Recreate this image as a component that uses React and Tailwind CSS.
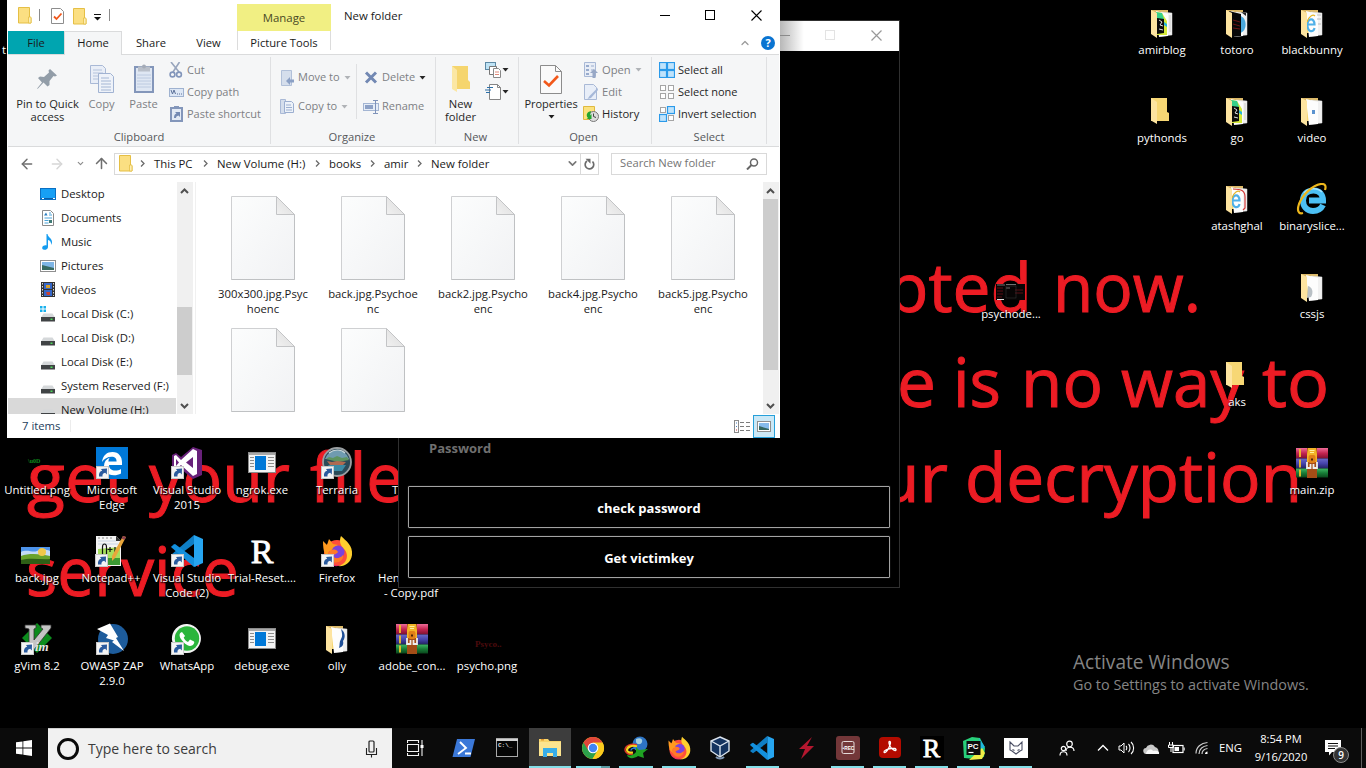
import React from "react";
import { ChevronUp, ChevronDown, ArrowLeft, ArrowRight, ArrowUp } from "lucide-react";

/* ---------- small building blocks ---------- */

const Svg = ({ w, h = w, vb, children, className = "" }) => (
  <svg width={w} height={h} viewBox={vb || `0 0 ${w} ${h}`} className={`block shrink-0 ${className}`} fill="none">
    {children}
  </svg>
);

const Caret = ({ color = "#1e1e1e", className = "" }) => (
  <Svg w={7} h={4} className={className}>
    <path d="M0.5 0h6L3.500 3.500z" fill={color} />
  </Svg>
);

/* ---------- desktop icons ---------- */

const Shortcut = () => (
  <g>
    <rect x="0.500" y="19.500" width="12" height="12" fill="#f4f4f4" stroke="#c9c9c9" />
    <path d="M3 29.500c-.5-3.500 1-5.500 3.200-5.800L5 22l6-.6-.2 6-1.600-1.700C7 26 6.200 27.500 6.500 29.500z" fill="#2b5b9e" />
  </g>
);

const FolderIcon = ({ kind }) => (
  <Svg w={32}>
    <path d="M5 3h16v14l2 1v8H5z" fill="#f7d774" />
    {kind !== "plain" && (
      <g>
        <path d="M5 3h17v3H5z" fill="#dcb968" />
        <path d="M15 5l11 1v22l-11 1z" fill="#f1f1f1" stroke="#d8d8d8" strokeWidth=".5" />
        <path d="M10 4l12 3v22l-9 1z" fill="#fdfdfd" />
      </g>
    )}
    {kind === "pc" && (
      <g>
        <path d="M10 5l6 1 5 8v14l-10 0z" fill="#d6ea3a" />
        <path d="M10 5l6 1 2 6-8 0z" fill="#36cf8a" />
        <path d="M11 11l7 1v14l-7 1z" fill="#0b0b0b" />
        <path d="M13 13l3 2-2 3 3 1M13 22l4 1" stroke="#ddd" strokeWidth="1" />
        <path d="M18 15l3 2v3l-3-2z" fill="#25b7d9" />
        <path d="M24 8v17" stroke="#ccc" />
      </g>
    )}
    {kind === "dark" && (
      <g>
        <path d="M19 9c7 1 8 15 0 17z" fill="#49a8dd" />
        <path d="M8 4l12 3v22l-9 1z" fill="#080808" />
        <path d="M12 13l7 2M12 17l7 2M12 21l7 1" stroke="#6b1414" strokeWidth="1" />
        <path d="M20 5l5 1v3z" fill="#222" />
      </g>
    )}
    {(kind === "ie" || kind === "iered") && (
      <g>
        <path d="M18.500 21c-1 5-6.500 4-7-2-.5-8 7-9 7-1.500h-6" stroke="#4fb0e8" strokeWidth="2.200" />
        <path d="M11 15c2-6 6-8 8-6" stroke="#e5b62a" strokeWidth="1.200" />
        {kind === "iered" ? (
          <path d="M12 6c9 0 12 2 12 8v11l-2 2" stroke="#d23b3b" strokeWidth="1.200" />
        ) : (
          <path d="M21 8h4M21 12h4M22 17h3" stroke="#bbb" strokeWidth="1" />
        )}
      </g>
    )}
    {kind === "video" && <rect x="16" y="15" width="3" height="4" fill="#5b93cf" />}
    {kind === "css" && <path d="M12 15c4 1 6 6 3 11l-4 1z" fill="#b9c0c5" />}
    {kind === "olly" && <path d="M20 6c4 3 5 8 2 12 1 4-1 6-4 7 1-3 0-6 2-9s1-6 0-10z" fill="#1f4f97" />}
    <path d={kind === "plain" ? "M5 3l6 4v22l-6-3.500z" : "M5 3l6 3v25l-6-4z"} fill="#fde4a0" />
  </Svg>
);

const WinRar = () => (
  <Svg w={32}>
    <defs>
      <linearGradient id="rr" x1="0" y1="0" x2="0" y2="1"><stop stopColor="#ee6c98" /><stop offset=".5" stopColor="#c32450" /><stop offset="1" stopColor="#7c1030" /></linearGradient>
      <linearGradient id="rb" x1="0" y1="0" x2="0" y2="1"><stop stopColor="#6a69c9" /><stop offset=".5" stopColor="#4543ab" /><stop offset="1" stopColor="#22215f" /></linearGradient>
      <linearGradient id="rg" x1="0" y1="0" x2="0" y2="1"><stop stopColor="#3fb765" /><stop offset=".5" stopColor="#177c36" /><stop offset="1" stopColor="#0a461c" /></linearGradient>
    </defs>
    <rect x="0" y="1" width="32" height="10.500" fill="url(#rr)" />
    <rect x="0" y="11.500" width="32" height="10" fill="url(#rb)" />
    <rect x="0" y="21.500" width="32" height="9" fill="url(#rg)" />
    <path d="M4 2v8M4 12.500v8M4 22.500v7" stroke="#f0c028" strokeWidth="1.800" />
    <rect x="11" y="1" width="10" height="30" fill="#a34d17" />
    <path d="M12 1h8l1 6v8H11V7z" fill="#f3b427" />
    <rect x="12.500" y="8" width="7" height="8" rx="2" fill="#e07f18" />
    <path d="M13.500 3.500h5M14 5.500h4" stroke="#fff0a0" />
    <path d="M15 11.500h2v2h-2z" fill="#4b2508" />
    <path d="M11 15v6h3.500v-4M21 15v6h-3.500v-4" stroke="#eee" strokeWidth="1.800" />
  </Svg>
);

const InternetExplorer = () => (
  <Svg w={32}>
    <path d="M27 22c-2 4-5.500 6-10 6-6 0-10-4.500-10-10.500S11 7.500 17.500 7.500c6 0 9.500 4 9.500 10H13" stroke="#4cc0f5" strokeWidth="6" />
    <path d="M8 10c4-5 13-6 18-1" stroke="#a8e4ff" strokeWidth="1.500" />
    <path d="M7 30c-5 1.500-6-3-4-9C7 11 17 2 25 1c5-.5 5 3 4 6" stroke="#edb71c" strokeWidth="2.200" />
  </Svg>
);

const Edge = () => (
  <Svg w={32}>
    <rect width="32" height="32" fill="#0078d7" />
    <path d="M6 15C7 8 11 5 16.500 5 23 5 26 10 26 15v3H13c0 4 3 5.500 6 5.500 2.500 0 4.500-.7 6-1.600v4.500c-2 1.200-4.500 1.800-7 1.800C11 28.200 8 24 8 19c0-4 2-7 6-8.500-1 1-1.500 2.500-1.600 4h8.200c0-3-1.500-4.800-5-4.800-4 0-7.500 2-9.600 5.300z" fill="#fff" />
    <Shortcut />
  </Svg>
);

const VisualStudio = () => (
  <Svg w={32}>
    <path d="M22 0l9 3v25l-9 4-12-10-5 4-4-2V8l4-2 5 4z" fill="#68217a" />
    <path d="M22 2l4 2v23l-4 2L10 18l-5 4-2-1V9l2-1 5 5z" fill="#fff" />
    <path d="M22 10v11l-7-5.500zM5 12v7l3-3.500z" fill="#68217a" />
    <Shortcut />
  </Svg>
);

const ExeWindow = () => (
  <Svg w={32}>
    <rect x="2.500" y="5.500" width="27" height="20" fill="#f3f3f3" stroke="#8b8b8b" />
    <rect x="3" y="6" width="26" height="2" fill="#a9a9a9" />
    <rect x="9" y="9" width="11" height="14" fill="#0078d7" />
    <path d="M4 10.500h4M4 13.500h4M4 16.500h4M4 19.500h4M22 10.500h6M22 13.500h6M22 16.500h6M22 19.500h6" stroke="#8c8c8c" />
  </Svg>
);

const Terraria = () => (
  <Svg w={32}>
    <circle cx="16" cy="15" r="14" fill="#2a4a58" stroke="#9a9fa2" strokeWidth="1.800" />
    <path d="M4 12a12.500 12.500 0 0124 0z" fill="#6f9bb0" />
    <path d="M5 12l3-2 4 1 4-2 5 2 5-1 2 3-11 2z" fill="#5e9460" />
    <path d="M6 14l5 1 5-1 9 1-3 3H9z" fill="#b06a50" />
    <path d="M7 18h18l-4 6H11z" fill="#3b8aa4" />
    <path d="M8 6c5-4 12-4 16 0" stroke="#c9d6da" strokeWidth="1.200" />
    <Shortcut />
  </Svg>
);

const Landscape = () => (
  <Svg w={32}>
    <rect x="0" y="12" width="29" height="17" fill="#4d93ea" />
    <path d="M0 17c6-3 12 1 16-1s9-2 13 0v5H0z" fill="#c4dbf6" />
    <path d="M0 21c8-3 20-2 29 0v8H0z" fill="#6aa32c" />
    <path d="M0 25c10-3 20 0 29-1v5H0z" fill="#2e5f16" />
    <circle cx="21" cy="17" r="4" fill="#f1c84a" />
  </Svg>
);

const NotepadPP = () => (
  <Svg w={32}>
    <path d="M1 1h20l5 5v25H1z" fill="#f4f4f4" />
    <path d="M3 14l22-2v18H3z" fill="#a5df5c" />
    <path d="M3 23h22v7H3z" fill="#3c9a33" />
    <path d="M3 3h2M7 3h2M11 3h2M15 3h2" stroke="#888" />
    <path d="M3 6h18M3 9h20" stroke="#c9d6e5" />
    <path d="M21 1v5h5z" fill="#333" />
    <path d="M7.500 21V12c0-4 4-4 4 0v8M15 12v5M12.500 14.500h5M20 12v5" stroke="#111" strokeWidth="1.200" />
    <path d="M28 1l3 1-11 21-3 3v-5z" fill="#e9a63a" />
    <path d="M28 1l3 1-1.500 3-3-1.500z" fill="#8f4250" />
    <Shortcut />
  </Svg>
);

const VSCodeGlyph = () => (
  <g>
    <path d="M0 12l3-3 22 17v6L1.500 12z" fill="#0b6db3" />
    <path d="M23 0l9 4v24l-9 4z" fill="#26a5f0" />
    <path d="M23 0v9L4 23l-4-3z" fill="#0f7fc6" />
    <path d="M23 32v-9L4 9l-4 3z" fill="#1390dd" />
  </g>
);

const VSCode = () => (
  <Svg w={32}>
    <VSCodeGlyph />
    <Shortcut />
  </Svg>
);

const FirefoxGlyph = () => (
  <g>
    <circle cx="16" cy="18" r="13" fill="#ff4f3a" />
    <path d="M20 1c5 5 12 9 11 19-1 8-8 12-14 11 10-2 11-12 6-17-4-4-5-8-3-13z" fill="#ffcf2e" />
    <path d="M2 6l4 4 2-6 4 5 5 1c-3 3-5 4-5 6-5-1-6 3-3 7-5-2-7-6-7-17z" fill="#ff9a1f" />
    <circle cx="17" cy="17" r="6.500" fill="#7b43dd" />
    <path d="M9 16c4-3 7-1 8 1-2 3-5 2-6 4 2 3 8 3 11-1 1 5-5 9-10 7-5-2-6-8-3-11z" fill="#ff7a28" />
    <path d="M4 22c3 7 10 9 16 8-6 3-14 0-16-8z" fill="#e9246e" />
  </g>
);

const Firefox = () => (
  <Svg w={32}>
    <FirefoxGlyph />
    <Shortcut />
  </Svg>
);

const RGlyph = ({ className = "text-[34px] h-8 w-8" }) => (
  <div className={`grid place-items-center font-['Liberation_Serif',serif] leading-none text-white [-webkit-text-stroke:0.8px_#fff] ${className}`}>R</div>
);

const GVim = () => (
  <Svg w={32}>
    <path d="M16 0l15 15-15 15L1 15z" fill="#0b8c1c" />
    <path d="M4 2h11v3l-2 1v11l9-11-2-1V2h10v3L12 28H8V6L4 5z" fill="#c4c4c4" stroke="#333" strokeWidth=".8" />
    <text x="14" y="28" fontSize="13" fontStyle="italic" fontWeight="bold" fontFamily="Liberation Serif, serif" fill="#e4e4e4">im</text>
    <Shortcut />
  </Svg>
);

const Zap = () => (
  <Svg w={32}>
    <circle cx="17" cy="16" r="15" fill="#1d5c9c" />
    <path d="M1 6L14 0.500 22 14l-2 1 8 13-12-9 2-1.500-8-2.500 2-3z" fill="#fff" />
    <Shortcut />
  </Svg>
);

const WhatsApp = () => (
  <Svg w={32}>
    <path d="M1 31l2-8A14.500 14.500 0 1116 30c-3 0-5 0-7-1.500z" fill="#f4f4f4" />
    <circle cx="16" cy="15.500" r="12.200" fill="#2bb53c" />
    <path d="M11 9c-3 1-3 4-1 7s6 7 9 7c3 0 5-3 4-4.500l-4-2-2 2.500c-2-1-3.500-2.500-4.300-4.500l1.400-1.500z" fill="#fff" />
    <Shortcut />
  </Svg>
);

const PsychoShot = () => (
  <Svg w={32}>
    <rect x="1" y="13" width="29" height="16" fill="#070505" />
    <path d="M2 14h8M11 13.500h10M11 17h4" stroke="#8b8b8b" strokeWidth=".8" />
    <path d="M2 17h6M2 20h6M2 23h6M2 26h5M20 19h8M20 22h8" stroke="#5b0f14" strokeWidth="1" />
    <path d="M2 28.500h7" stroke="#ddd" />
    <rect x="11" y="15" width="10" height="12" stroke="#333" strokeWidth=".6" />
  </Svg>
);

const TinyLabel = ({ color, x, y, children, size }) => (
  <Svg w={32}>
    <text x={x} y={y} fontSize={size} fontWeight="bold" fontFamily="Liberation Serif, serif" fill={color}>{children}</text>
  </Svg>
);

/* left/top classes of each cell on the free desktop canvas */
const desktop = [
  ["left-[-1px] top-[443px]", <TinyLabel color="#0f8a1e" x="7" y="16" size="6">{"\\u0D"}</TinyLabel>, "Untitled.png"],
  ["left-[74px] top-[443px]", <Edge />, "Microsoft\nEdge"],
  ["left-[149px] top-[443px]", <VisualStudio />, "Visual Studio\n2015"],
  ["left-[224px] top-[443px]", <ExeWindow />, "ngrok.exe"],
  ["left-[299px] top-[443px]", <Terraria />, "Terraria"],
  ["left-[-1px] top-[531px]", <Landscape />, "back.jpg"],
  ["left-[73px] top-[531px]", <NotepadPP />, "Notepad++"],
  ["left-[149px] top-[531px]", <VSCode />, "Visual Studio\nCode (2)"],
  ["left-[224px] top-[531px]", <RGlyph />, "Trial-Reset...."],
  ["left-[299px] top-[531px]", <Firefox />, "Firefox"],
  ["left-[-1px] top-[619px]", <GVim />, "gVim 8.2"],
  ["left-[74px] top-[619px]", <Zap />, "OWASP ZAP\n2.9.0"],
  ["left-[149px] top-[619px]", <WhatsApp />, "WhatsApp"],
  ["left-[224px] top-[619px]", <ExeWindow />, "debug.exe"],
  ["left-[299px] top-[619px]", <FolderIcon kind="olly" />, "olly"],
  ["left-[374px] top-[619px]", <WinRar />, "adobe_con..."],
  ["left-[449px] top-[619px]", <TinyLabel color="#4d0b0d" x="4" y="24" size="9">Psyco..</TinyLabel>, "psycho.png"],
  ["left-[1124px] top-[3px]", <FolderIcon kind="pc" />, "amirblog"],
  ["left-[1199px] top-[3px]", <FolderIcon kind="dark" />, "totoro"],
  ["left-[1274px] top-[3px]", <FolderIcon kind="ie" />, "blackbunny"],
  ["left-[1124px] top-[91px]", <FolderIcon kind="plain" />, "pythonds"],
  ["left-[1199px] top-[91px]", <FolderIcon kind="pc" />, "go"],
  ["left-[1274px] top-[91px]", <FolderIcon kind="video" />, "video"],
  ["left-[1199px] top-[179px]", <FolderIcon kind="iered" />, "atashghal"],
  ["left-[1274px] top-[179px]", <InternetExplorer />, "binaryslice..."],
  ["left-[973px] top-[267px]", <PsychoShot />, "psychode..."],
  ["left-[1274px] top-[267px]", <FolderIcon kind="css" />, "cssjs"],
  ["left-[1199px] top-[355px]", <FolderIcon kind="plain" />, "aks"],
  ["left-[1274px] top-[443px]", <WinRar />, "main.zip"],
];

const labelShadow = "[text-shadow:0_1px_2px_#000,1px_1px_1px_#000]";

function DesktopIcon({ pos, icon, label }) {
  return (
    <div className={`absolute flex w-[76px] flex-col items-center pt-1 ${pos}`}>
      {icon}
      <span className={`mt-[3px] text-center text-[11.400px] leading-[15px] whitespace-pre text-white ${labelShadow}`}>{label}</span>
    </div>
  );
}

function Wallpaper() {
  const words = [
    ["pted", 887, 312, 145], ["now.", 1053, 312, 148],
    ["e", 897, 407, 39], ["is", 953, 407, 48], ["no", 1021, 407, 82], ["way", 1121, 407, 123], ["to", 1262, 407, 67],
    ["get", 27, 502, 102], ["your", 149, 502, 141], ["file", 310, 502, 94],
    ["ur", 877, 502, 71], ["decryption", 965, 502, 337], ["service", 26, 596, 213],
  ];
  return (
    <svg className="absolute inset-0" width="1366" height="768">
      {words.map(([t, x, y, w]) => (
        <text key={t + x} x={x} y={y} textLength={w} lengthAdjust="spacingAndGlyphs" fontSize="67" fontFamily="Open Sans, sans-serif" fill="#ec1c24" stroke="#ec1c24" strokeWidth="1">{t}</text>
      ))}
    </svg>
  );
}

/* ---------- password window behind ---------- */

function PasswordWindow() {
  return (
    <section className="absolute top-5 left-[398px] flex h-[568px] w-[502px] flex-col border border-[#303030] bg-black">
      <header className="flex h-[30px] shrink-0 items-center justify-end bg-white">
        <div className="flex h-full w-[119px] items-center bg-linear-to-r from-[#b8b8b8] to-white to-20% pb-[2px]">
          <span className="h-px w-[10px] bg-[#8a8a8a]" />
          <span className="ml-[35px] h-[10px] w-[10px] border border-[#e3e3e3]" />
          <Svg w={11} className="ml-[36px]"><path d="M.5.5l10 10M10.500.5l-10 10" stroke="#999" strokeWidth="1.200" /></Svg>
        </div>
      </header>
      <div className="mt-auto flex flex-col gap-2 px-[9px] pb-[9px] font-bold">
        <div className="mb-[21px] pl-[21px] text-[13px] leading-[18px] text-[#6f6f6f]">Password</div>
        <button className="h-[42px] rounded-[1px] border border-[#a3a3a3] pt-[2px] text-[13px] leading-none text-white shadow-[0_0_1px_#777]">check password</button>
        <button className="h-[42px] rounded-[1px] border border-[#a3a3a3] pt-[2px] text-[13px] leading-none text-white shadow-[0_0_1px_#777]">Get victimkey</button>
      </div>
    </section>
  );
}

/* ---------- explorer ---------- */

const MiniFolder = ({ className = "" }) => (
  <Svg w={14} h={17} className={className}>
    <path d="M.5.5h11v10l1.500.5v5H.5z" fill="#fbdf82" stroke="#e5bf45" />
    <path d="M10.500 10h2.500v6h-2.500z" fill="#fdeeb5" stroke="#e5bf45" strokeWidth=".8" />
  </Svg>
);

function TitleBar() {
  return (
    <div className="flex h-[31px] items-start pl-[10px]">
      <MiniFolder className="mt-[7px]" />
      <span className="mt-[9px] ml-[7px] h-3 w-px bg-[#8b8b8b]" />
      <Svg w={13} h={16} className="mt-2 ml-[11px]">
        <path d="M.5.5h9l3 3v12H.5z" fill="#fff" stroke="#8d8d8d" />
        <path d="M3 8.500l2.500 2.500 5-5.500" stroke="#f0581c" strokeWidth="1.800" />
      </Svg>
      <MiniFolder className="mt-2 ml-[9px]" />
      <Svg w={7} h={7} className="mt-[14px] ml-[7px]"><path d="M0 .5h7" stroke="#111" /><path d="M0 3h7L3.500 6.500z" fill="#111" /></Svg>
      <span className="mt-[9px] ml-[8px] h-3 w-px bg-[#8b8b8b]" />
      <div className="mt-1 ml-[127px] h-[27px] w-[94px] bg-[#f1ef83] text-center text-[11.400px] leading-[28px] text-[#4a4a26]">Manage</div>
      <span className="ml-[13px] text-[11.400px] leading-[31px]">New folder</span>
      <div className="mr-[17px] ml-auto flex h-[30px] items-center">
        <span className="h-px w-[10px] bg-black" />
        <span className="ml-[35px] h-[10px] w-[10px] border border-black" />
        <Svg w={11} className="ml-[36px]"><path d="M.5.5l10 10M10.500.5l-10 10" stroke="#000" strokeWidth="1.100" /></Svg>
      </div>
    </div>
  );
}

function TabRow() {
  return (
    <div className="flex h-[23px] text-center text-[11.200px] leading-[23px]">
      <div className="w-[56px] bg-[#00a5b0]">File</div>
      <div className="relative z-10 -mb-px w-[58px] border border-b-0 border-[#dadbdc] bg-[#f5f6f7] leading-[22px]">Home</div>
      <div className="w-[58px]">Share</div>
      <div className="w-[57px]">View</div>
      <div className="mb-1 w-[94px] border-x border-[#dcdcdc]">Picture Tools</div>
      <div className="mr-1 ml-auto flex items-center gap-[10px]">
        <ChevronUp size={12} strokeWidth={2.500} color="#9a9a9a" />
        <div className="grid h-[14px] w-[14px] place-items-center rounded-full bg-[#0a74d1] text-[11px] leading-none font-bold text-white">?</div>
      </div>
    </div>
  );
}

const Small = ({ icon, children, off, caret, h = "h-[22px]" }) => (
  <div className={`flex ${h} items-center whitespace-nowrap ${off ? "text-[#7d8084]" : "text-[#262626]"}`}>
    <span className="mr-[3px] grid w-4 shrink-0 place-items-center">{icon}</span>
    {children}
    {caret && <Caret className="ml-[4px]" color={caret} />}
  </div>
);

const Big = ({ icon, lines, w, off, children }) => (
  <div className={`flex shrink-0 flex-col items-center pt-[7px] text-center leading-[13px] whitespace-nowrap ${w} ${off ? "text-[#7d8084]" : "text-[#262626]"}`}>
    <div className="mb-px grid h-[34px] place-items-center">{icon}</div>
    {lines.map((l) => <div key={l}>{l}</div>)}
    {children}
  </div>
);

const Group = ({ w, label, children }) => (
  <div className={`flex shrink-0 flex-col ${w}`}>
    <div className="flex h-[72px]">{children}</div>
    <div className="h-[19px] text-center leading-[19px] text-[#55585b]">{label}</div>
  </div>
);

const Sep = () => <span className="mt-[2px] h-[87px] w-px shrink-0 bg-[#dfe0e2]" />;

const CopyDocs = () => (
  <Svg w={24} h={28}>
    <path d="M.5.5h12l3 3v15H.5z" fill="#e9eef7" stroke="#a9b9d6" />
    <path d="M3 5h9M3 8h10M3 11h10M3 14h10" stroke="#b4c3dc" />
    <path d="M8.500 8.500h12l3 3v16h-15z" fill="#eef2f9" stroke="#a1b3d2" />
    <path d="M11 13h8M11 16h10M11 19h10M11 22h10M11 25h10" stroke="#a4b6d4" />
  </Svg>
);

const ClipboardIcon = () => (
  <Svg w={22} h={30}>
    <rect x="2" y="3" width="18" height="25" fill="#dfe7f3" stroke="#8396ba" strokeWidth="2" />
    <rect x="5" y="2.500" width="12" height="5" fill="#b9bfc9" />
    <circle cx="11" cy="2.500" r="2" fill="#a4abb7" />
    <path d="M4 11h14M4 14h14M4 17h14M4 20h14M4 23h14" stroke="#bccae0" />
  </Svg>
);

const select = {
  all: [1, 1, 1, 1],
  none: [0, 0, 0, 0],
  invert: [0, 1, 1, 0],
};
const SelectIcon = ({ kind }) => (
  <Svg w={16}>
    {select[kind].map((on, i) => {
      const x = (i % 2) * 8;
      const y = i > 1 ? 8 : 0;
      return on ? (
        <rect key={i} x={x + 0.5} y={y + 0.5} width="7" height="7" fill="#bfe3fb" stroke="#2a9aea" strokeWidth="1.200" />
      ) : (
        <rect key={i} x={x + 1.5} y={y + 1.5} width="5" height="5" fill="#fff" stroke="#a5a5a5" />
      );
    })}
  </Svg>
);

function Ribbon() {
  return (
    <div className="flex h-[93px] border-y border-[#dadbdc] bg-[#f5f6f7] text-[11.200px]">
      <Group w="w-[262px]" label="Clipboard">
        <Big w="ml-[6px] w-[67px]" lines={["Pin to Quick", "access"]} icon={
          <Svg w={21} h={22}><path d="M13 1l7 6.500-2 1-1.500-.5-4 5v4l-2 1.500-4-4L1 20.500 0 21l.5-1L5 14.500l-4-4.500 2-1.500 4 .5 5-4.500-.5-2z" fill="#929da8" /></Svg>
        } />
        <Big w="w-[41px]" off lines={["Copy"]} icon={<CopyDocs />} />
        <Big w="w-[43px]" off lines={["Paste"]} icon={<ClipboardIcon />} />
        <div className="ml-[3px] pt-[4px] text-[11px]">
          <Small off icon={<Svg w={14} h={16}><path d="M2 0l8 10M10.500 0L4 10" stroke="#98a5bd" strokeWidth="1.600" /><circle cx="3.500" cy="12.500" r="2.400" stroke="#8295ba" strokeWidth="1.600" /><circle cx="10" cy="12.500" r="2.400" stroke="#8295ba" strokeWidth="1.600" /></Svg>}>Cut</Small>
          <Small off icon={<Svg w={15} h={9}><rect x=".5" y=".5" width="14" height="8" fill="#dde7f5" stroke="#9fb2d0" /><path d="M2 2l1.500 4L5 2l1.500 4M8 6h1M10 6h1M12 6h1" stroke="#5c7199" /></Svg>}>Copy path</Small>
          <Small off icon={<Svg w={13} h={16}><rect x="1" y="2" width="11" height="13" fill="#e3eaf5" stroke="#8396ba" strokeWidth="2" /><path d="M4 0h5v3H4z" fill="#8396ba" /><path d="M4 12c0-3 1-4 2.500-4.500L5 6h5v5L8.500 9.500C6.500 10 6 11 6 12z" fill="#7389b3" /></Svg>}>Paste shortcut</Small>
        </div>
      </Group>
      <Sep />
      <Group w="w-[164px]" label={<span className="-mr-px -ml-[3px]">Organize</span>}>
        <div className="w-[85px] pt-[8px] pl-[8px] text-[11px]">
          <Small h="h-[29px]" off caret="#b0b3b7" icon={<Svg w={13} h={16}><path d="M.5.5h10v15H.5z" fill="#d5deec" stroke="#b1c0d9" /><path d="M5 11l4-4v2.500h4v3H9V15z" fill="#8ba0c5" /></Svg>}>Move to</Small>
          <Small h="h-[29px]" off caret="#b0b3b7" icon={<Svg w={14} h={16}><path d="M.5.5h5v14h-5z" fill="#d5deec" stroke="#a9b9d6" /><path d="M4.500 2.500h7l2 2v9h-9z" fill="#edf2f9" stroke="#9cafd0" /><path d="M6 6h5M6 8.500h6M6 11h6" stroke="#9cafd0" /></Svg>}>Copy to</Small>
        </div>
        <span className="mt-[9px] h-[55px] w-px bg-[#dfe0e2]" />
        <div className="pt-[8px] pl-[6px] text-[11px]">
          <Small h="h-[29px]" off caret="#262626" icon={<Svg w={14} h={13}><path d="M2 1.500l10 10M12 1.500l-10 10" stroke="#7288b3" strokeWidth="3" /></Svg>}>Delete</Small>
          <Small h="h-[29px]" off icon={<Svg w={16} h={14}><rect x=".5" y="3.500" width="15" height="7" fill="#e6edf7" stroke="#a3b5d3" /><rect x="2" y="5" width="8" height="4" fill="#8da1c6" /><path d="M12.500 0v14M10 .5h5M10 13.500h5" stroke="#7f93ba" /></Svg>}>Rename</Small>
        </div>
      </Group>
      <Sep />
      <Group w="w-[82px]" label={<span className="mr-[3px]">New</span>}>
        <Big w="w-[49px]" lines={["New", "folder"]} icon={
          <Svg w={20} h={28}><path d="M1 1h16v14l2 2v7H1z" fill="#f5d56e" /><path d="M1 1l5 4v22l-5-3z" fill="#fbe7a4" /></Svg>
        } />
        <div className="pt-[4px]">
          <div className="flex h-[22px] items-center">
            <Svg w={17} h={16}><rect x=".5" y=".5" width="10" height="7" fill="#bfe3f5" stroke="#5d89a5" /><path d="M4.500 4.500h7v8h-7z" fill="#fff" stroke="#777" /><path d="M8.500 6.500h5l2 2v7h-7z" fill="#fff" stroke="#888" /><path d="M10 10h4M10 12.500h4" stroke="#e08a7a" /></Svg>
            <Caret color="#262626" />
          </div>
          <div className="flex h-[22px] items-center">
            <Svg w={17} h={16}><path d="M4.500.5h8l3 3v12h-11z" fill="#fff" stroke="#858585" /><path d="M12.500.5v3h3" stroke="#858585" /><path d="M2 3.500h6M0 6h6M1 8.500h4" stroke="#2c6fa8" strokeWidth="1.200" /></Svg>
            <Caret color="#262626" />
          </div>
        </div>
      </Group>
      <Sep />
      <Group w="w-[132px]" label={<span className="mr-[3px]">Open</span>}>
        <Big w="w-[64px] text-[11px]" lines={["Properties"]} icon={
          <Svg w={22} h={29}><path d="M.5.5h15l6 6v22H.5z" fill="#fafafa" stroke="#8c8c8c" /><path d="M15.500.5v6h6" stroke="#8c8c8c" /><path d="M4 16l5 4.500 9-9.500" stroke="#f2581a" strokeWidth="2.600" /></Svg>
        }><Caret className="mt-[5px]" /></Big>
        <div className="pt-[4px]">
          <Small off caret="#b0b3b7" icon={<Svg w={14} h={16}><path d="M.5.5h11v14H.5z" fill="#e8edf6" stroke="#a9b9d6" /><path d="M2 3h3v2H2zM2 7h3v2H2zM2 11h3v2H2z" fill="#98abcd" /><path d="M7 4h3M7 8h3" stroke="#98abcd" /><path d="M10 7l4 4h-2.500v5h-3v-5H6z" fill="#98a8c6" /></Svg>}>Open</Small>
          <Small off icon={<Svg w={14} h={16}><path d="M.5.5h9l3 3v12H.5z" fill="#e8eef8" stroke="#a9b9d6" /><path d="M13.500 4l-8 8-2 3 3.500-1 7-8z" fill="#a6b8d8" /></Svg>}>Edit</Small>
          <Small icon={<Svg w={16}><path d="M.5.5h11v13H.5z" fill="#fbe27e" stroke="#dfb93f" /><circle cx="10.500" cy="10.500" r="5" fill="#dcdcdc" stroke="#777" /><path d="M10.500 7.500v3l2.500 1" stroke="#444" /><path d="M8 5C4 6 2.500 9 5 12l-1.500 1h5V8L7 9.500z" fill="#23a52f" /></Svg>}>History</Small>
        </div>
      </Group>
      <Sep />
      <Group w="w-[114px]" label="Select">
        <div className="pt-[4px] pl-[7px] text-[11px]">
          <Small icon={<SelectIcon kind="all" />}>Select all</Small>
          <Small icon={<SelectIcon kind="none" />}>Select none</Small>
          <Small icon={<SelectIcon kind="invert" />}>Invert selection</Small>
        </div>
      </Group>
      <Sep />
    </div>
  );
}

const CrumbArrow = () => (
  <Svg w={5} h={7}><path d="M1 .5l3 3-3 3" stroke="#6b6b6b" strokeWidth="1.300" /></Svg>
);

function AddressBar() {
  return (
    <div className="flex h-[35px] items-center pb-[2px] pl-[11px]">
      <ArrowLeft size={16} strokeWidth={2.200} color="#6f6f6f" />
      <ArrowRight className="ml-[14px]" size={16} strokeWidth={2.200} color="#d6d6d6" />
      <ChevronDown className="ml-[11px]" size={9} strokeWidth={3} color="#8a8a8a" />
      <ArrowUp className="ml-[8px]" size={17} strokeWidth={2.200} color="#6f6f6f" />
      <div className="ml-[4px] flex h-[22px] w-[485px] items-center border border-[#d9d9d9] pl-[4px] text-[11.400px]">
        <MiniFolder />
        <span className="ml-[7px]"><CrumbArrow /></span>
        <span className="ml-[9px] w-[49px] whitespace-nowrap">This PC</span>
        <CrumbArrow />
        <span className="ml-[9px] w-[98px] whitespace-nowrap">New Volume (H:)</span>
        <CrumbArrow />
        <span className="ml-[9px] w-[41px]">books</span>
        <CrumbArrow />
        <span className="ml-[9px] w-[33px]">amir</span>
        <CrumbArrow />
        <span className="ml-[9px] whitespace-nowrap">New folder</span>
        <ChevronDown className="mr-[1px] ml-auto" size={13} strokeWidth={3} color="#777" />
        <span className="h-full w-px bg-[#d9d9d9]" />
        <Svg w={11} h={12} className="mx-[3px]"><path d="M3 3a4.300 4.300 0 105.500.5" stroke="#6b6b6b" strokeWidth="1.700" /><path d="M1.500.8h5v5z" fill="#6b6b6b" /></Svg>
      </div>
      <div className="ml-3 flex h-[22px] w-[156px] items-center justify-between border border-[#d9d9d9] pr-[7px] pl-2 text-[11.200px] text-[#757575]">
        Search New folder
        <Svg w={13} h={12}><circle cx="8" cy="4.500" r="3.500" stroke="#666" strokeWidth="1.500" /><path d="M5.500 7L1 11.500" stroke="#666" strokeWidth="2" /></Svg>
      </div>
    </div>
  );
}

const Drive = ({ win }) => (
  <Svg w={16}>
    {win && <path d="M0 0h2.500v2.500H0zM3.500 0H6v2.500H3.500zM0 3.500h2.500V6H0zM3.500 3.500H6V6H3.500z" fill="#18b0ec" />}
    <path d="M3.500 7.500h9l2.500 4H1z" fill="#d5d8da" />
    <rect x="1" y="11" width="14" height="4.500" fill="#404345" />
    <rect x="10.500" y="12.500" width="2" height="1.500" fill="#4cdb5a" />
  </Svg>
);

const navIcons = {
  desktop: <Svg w={16}><rect x=".5" y="2.500" width="15" height="11" fill="#17a0f5" stroke="#0a6fc2" /><path d="M1 12.500h14" stroke="#0b5ea8" /><path d="M2 12.500h2M13 12.500h2" stroke="#fff" /></Svg>,
  documents: <Svg w={16}><path d="M2.500.5h8l3 3v12h-11z" fill="#fff" stroke="#8a8a8a" /><path d="M9 5h3M4.500 8h7.500M4.500 10.500h4M4.500 13h4M9 3h2" stroke="#4aa3d8" /><path d="M4 5.500l2-3 1.500 3z" fill="#2a7fc0" /><path d="M9 10h3v3H9z" fill="#3f7b75" /></Svg>,
  music: <Svg w={16}><path d="M7.500 0c.5 3.500 5 4.500 4.500 8.500-.3 1.500-1 2.500-1 2.500.5-3-1-4.500-3-5v7c0 2-2 3-4 2.800-2-.2-2.500-2.800-.5-4C4.500 11 6 11 6.500 11.500V0z" fill="#149cf0" /></Svg>,
  pictures: <Svg w={16}><rect x=".5" y="2.500" width="15" height="11" fill="#fff" stroke="#8f8f8f" /><rect x="2" y="4" width="12" height="8" fill="#7fb6e6" /><path d="M2 7c4 1 8 2 12 3v2H2z" fill="#386b62" /></Svg>,
  videos: <Svg w={16}><rect x="1" y="0" width="14" height="15" fill="#333" /><rect x="4" y="1" width="8" height="6" fill="#3567c9" /><rect x="4" y="8" width="8" height="6" fill="#3567c9" /><path d="M6 3h4v3H6z" fill="#d6a02a" /><path d="M6 10h4v3H7z" fill="#c74232" /><path d="M2.500 1v13M13.500 1v13" stroke="#ddd" strokeDasharray="1.500 1.500" /></Svg>,
};

const nav = [
  ["Desktop", navIcons.desktop],
  ["Documents", navIcons.documents],
  ["Music", navIcons.music],
  ["Pictures", navIcons.pictures],
  ["Videos", navIcons.videos],
  ["Local Disk (C:)", <Drive win />],
  ["Local Disk (D:)", <Drive />],
  ["Local Disk (E:)", <Drive />],
  ["System Reserved (F:)", <Drive />],
  ["New Volume (H:)", <Drive />],
];

const files = [
  ["300x300.jpg.Psyc", "hoenc"],
  ["back.jpg.Psychoe", "nc"],
  ["back2.jpg.Psycho", "enc"],
  ["back4.jpg.Psycho", "enc"],
  ["back5.jpg.Psycho", "enc"],
  [],
  [],
];

const PageIcon = () => (
  <Svg w={65} h={85}>
    <defs>
      <linearGradient id="pg" x1="0" y1="0" x2="1" y2="1"><stop stopColor="#fcfdfd" /><stop offset="1" stopColor="#f1f2f4" /></linearGradient>
      <linearGradient id="fold" x1="0" y1="1" x2="1" y2="0"><stop stopColor="#f1f1f1" /><stop offset="1" stopColor="#dadada" /></linearGradient>
    </defs>
    <path d="M.5.5h45l18 18v65H.5z" fill="url(#pg)" stroke="#cfd0d2" />
    <path d="M63.500 18.500v65H.5" stroke="#bfc1c3" />
    <path d="M45.500.5l18 18h-18z" fill="url(#fold)" stroke="#c3c4c6" />
  </Svg>
);

const ScrollBar = ({ bar }) => (
  <div className="flex w-4 shrink-0 flex-col bg-[#f0f0f0]">
    <div className="grid h-[17px] w-[15px] shrink-0 place-items-center"><Svg w={9} h={6}><path d="M1 5l3.500-3.500L8 5" stroke="#505050" strokeWidth="2" /></Svg></div>
    <div className={`w-[15px] bg-[#cdcdcd] ${bar}`} />
    <div className="mt-auto grid h-[17px] w-[15px] place-items-center"><Svg w={9} h={6}><path d="M1 1l3.500 3.500L8 1" stroke="#505050" strokeWidth="2" /></Svg></div>
  </div>
);

function Explorer() {
  return (
    <section className="absolute top-0 left-[7px] flex h-[438px] w-[773px] flex-col bg-white px-px text-[11.300px] text-[#1a1a1a]">
      <TitleBar />
      <TabRow />
      <Ribbon />
      <AddressBar />
      <div className="flex h-[232px] overflow-hidden">
        <nav className="h-full w-[168px] shrink-0 overflow-hidden">
          {nav.map(([label, icon], i) => (
            <div key={label} className={`flex h-6 items-center gap-[5px] pl-8 whitespace-nowrap ${i === 9 ? "bg-[#d9d9d9]" : ""}`}>
              {icon}
              {label}
            </div>
          ))}
        </nav>
        <div className="ml-px flex"><ScrollBar bar="mt-[108px] h-[68px]" /></div>
        <div className="ml-[2px] grid flex-1 grid-cols-[repeat(5,110px)] content-start border-l border-[#f0f0f0] pt-[14px] pl-[12px]">
          {files.map((lines, i) => (
            <div key={i} className="flex h-[132px] flex-col items-center">
              <PageIcon />
              <div className="mt-[5px] text-center leading-[15px] whitespace-nowrap">
                {lines.map((l) => <div key={l}>{l}</div>)}
              </div>
            </div>
          ))}
        </div>
        <ScrollBar bar="h-[171px]" />
      </div>
      <div className="flex h-6 items-center pl-[14px] text-[#24405c]">
        7 items
        <span className="ml-[10px] h-3 w-px bg-[#ececec]" />
        <div className="mr-1 ml-auto flex h-full items-center gap-[3px]">
          <Svg w={16} h={13}><rect x=".5" y=".5" width="4" height="12" stroke="#8a8a8a" /><path d="M6 2.500h4M12 2.500h4M6 6.500h4M12 6.500h4M6 10.500h4M12 10.500h4" stroke="#7c7c7c" /><path d="M2 6.500h1M2 3h1" stroke="#4a80c0" /><path d="M2 10h1" stroke="#c33" /></Svg>
          <div className="grid h-[23px] w-[22px] place-items-center border border-[#26a0da] bg-[#cbe8f6]">
            <Svg w={14} h={11}><rect x=".5" y=".5" width="13" height="10" fill="#fff" stroke="#8f8f8f" /><rect x="2" y="2" width="10" height="7" fill="#86bbeb" /><path d="M2 5l10 3v1H2z" fill="#35675f" /></Svg>
          </div>
        </div>
      </div>
    </section>
  );
}

/* ---------- taskbar ---------- */

const g24 = {
  ps: <Svg w={24}><path d="M5 3h18l-4.500 18H.5z" fill="#3b78d8" /><path d="M8 6l6 6-8 6M13 17.500h6" stroke="#fff" strokeWidth="1.900" /></Svg>,
  cmd: <Svg w={24}><rect x="1.500" y="2.500" width="21" height="18" fill="#050505" stroke="#a9a9a9" /><path d="M1 4h22" stroke="#d2d2d2" strokeWidth="2" /><text x="3" y="11" fontSize="6" fontWeight="bold" fill="#ddd" fontFamily="Liberation Mono, monospace">C:\_</text></Svg>,
  explorer: <Svg w={24}><path d="M1 3h9l1.500 2H23v15H1z" fill="#f8d46b" /><path d="M1 6h22v14H1z" fill="#fce48f" /><path d="M5 12h14v9h-4v-4H9v4H5z" fill="#39aee8" /><path d="M3 3h3v1.500H3z" fill="#e0952e" /></Svg>,
  chrome: <Svg w={24}><circle cx="12" cy="12" r="11" fill="#fbcb1e" /><path d="M12 12L2.500 6.500A11 11 0 0011.500 23L17 14z" fill="#2ca04a" /><path d="M12 6.500h9.500A11 11 0 0111.500 23l5.500-9z" fill="#fbcb1e" /><path d="M12 6.500h9.500A11 11 0 002.500 6.500L7 14z" fill="#e0463a" /><circle cx="12" cy="12" r="5.300" fill="#fff" /><circle cx="12" cy="12" r="4.200" fill="#4285f4" /></Svg>,
  idm: <Svg w={24}><circle cx="16" cy="8" r="7.500" fill="#2d74c4" /><path d="M12 3c4-2 7 0 6 3s-5 3-6 0z" fill="#a5cfdf" /><path d="M13 9C7 7 1 10 1 14c0 3 4 5 8 4" stroke="#e0342a" strokeWidth="1.400" /><path d="M13 10.500C8 8.500 3 11 3 14c0 2 3 3 6 2.500" stroke="#f4d21e" strokeWidth="2.200" /><path d="M13 12.500c-3-1-6 0-6 2" stroke="#2b79d8" strokeWidth="1.500" /><path d="M12 11l3 3 9-1-5 4 1 5-6-2c-4 3-10 3-11-1 3 1 7 0 9-3z" fill="#1fa323" /></Svg>,
  firefox: <Svg w={24} vb="0 0 32 32"><FirefoxGlyph /></Svg>,
  vbox: <Svg w={24}><path d="M12 1l9 4v10l-9 6-9-6V5z" fill="#14335f" stroke="#dbe4ee" strokeWidth="1.400" /><path d="M3 5l9 5 9-5M12 10v11" stroke="#dbe4ee" strokeWidth="1.400" /><path d="M8 21c2 2 6 2 8 0" stroke="#7f97b5" strokeWidth="2" /></Svg>,
  vscode: <Svg w={24} vb="0 0 32 32"><VSCodeGlyph /></Svg>,
  bolt: <Svg w={24}><path d="M18 1L5 13h6l-4 10L20 10h-7z" fill="#b5172f" /></Svg>,
  rec: <Svg w={24}><rect width="24" height="24" rx="3" fill="#733739" /><rect x="6" y="5.500" width="12" height="12" rx="1.500" stroke="#e5dada" /><text x="6.500" y="13.500" fontSize="4.800" fontWeight="bold" fill="#fff" fontFamily="Liberation Sans, sans-serif">•REC</text></Svg>,
  pdf: <Svg w={22}><rect width="22" height="21" rx="4" fill="#b30b00" /><path d="M10.500 4.500c2 0 .5 4-1 7s-4 5-4.500 3.500 4-3 7-3.500 5.500 0 5 1.500-4-.5-5.500-3-2-5.500-1-5.500z" stroke="#fff" strokeWidth="1.300" /></Svg>,
  r: <RGlyph className="h-6 w-6 bg-black text-[26px]" />,
  pc: <Svg w={24}><path d="M1 5l9-4 8 1 5 10-1 9-9 2-11-1z" fill="#28d07a" /><path d="M17 2l6 9-4 3z" fill="#1fb8e0" /><path d="M20 12l3 5-3 6-13 1z" fill="#f0ee45" /><rect x="4.500" y="5" width="14" height="14" fill="#0c0c0c" /><text x="5.500" y="12.500" fontSize="8" fontWeight="bold" fill="#fff" fontFamily="Liberation Sans, sans-serif">PC</text><path d="M6.500 16.500h5" stroke="#fff" strokeWidth="1.200" /></Svg>,
  cat: <Svg w={24} h={20}><rect width="24" height="20" fill="#fff" /><path d="M6 4l4 4h4l4-4v8l-2 1-4 3-4-3-2-1zM8.500 11.500l2 1M15.500 11.500l-2 1" stroke="#4a4e63" strokeWidth="1.100" /></Svg>,
};

const apps = [
  ["ps", "w-[43px]", ""],
  ["cmd", "w-[44px]", ""],
  ["explorer", "w-[42px] bg-[#3d3d3d]", "w-[42px]"],
  ["chrome", "w-[43px]", "w-[34px] border-r-[9px] border-[#5b9ca3]"],
  ["idm", "w-[43px]", "w-[34px]"],
  ["firefox", "w-[43px]", "w-[34px]"],
  ["vbox", "w-[39px]", ""],
  ["vscode", "w-[46px]", "w-[33px]"],
  ["bolt", "w-[41px]", ""],
  ["rec", "w-[43px]", "w-[33px]"],
  ["pdf", "w-[41px]", "w-[33px]"],
  ["r", "w-[43px]", "w-[33px]"],
  ["pc", "w-[41px]", "w-[33px]"],
  ["cat", "w-[43px]", "w-[33px]"],
];

function Taskbar() {
  return (
    <footer className="absolute bottom-0 left-0 flex h-10 w-[1366px] items-center bg-[#0b0b0b] text-white">
      <div className="grid w-12 place-items-center">
        <Svg w={16}><path d="M0 2.300L6.500 1.400v6.100H0zM7.300 1.300L16 0v7.500H7.300zM0 8.400h6.500v6.200L0 13.700zM7.300 8.400H16V16l-8.700-1.200z" fill="#fff" /></Svg>
      </div>
      <div className="flex h-full w-[344px] items-center border-t border-[#cfcfcf] bg-[#f1f1f1] pr-[14px] pl-[9px] text-[14px] text-[#3c3c3c]">
        <span className="mr-[9px] h-[22px] w-[22px] rounded-full border-[3px] border-[#0a0a0a]" />
        Type here to search
        <Svg w={13} h={18} className="ml-auto"><rect x="4" y="1" width="5" height="11" stroke="#222" strokeWidth="1.200" rx="1" /><path d="M1.500 8v6.500h10V8M6.500 14.500v3" stroke="#222" strokeWidth="1.100" /></Svg>
      </div>
      <div className="grid w-[50px] place-items-center pr-[3px]">
        <Svg w={17} h={16}><path d="M0 .5h12M.5 0v3M11.500 0v3M0 15.500h12M.5 13v3M11.500 13v3M.5 4.500h11v7H.5zM15 0v16" stroke="#f3f3f3" strokeWidth="1.100" /><rect x="13.500" y="5" width="3" height="3" fill="#fff" /></Svg>
      </div>
      {apps.map(([k, w, u]) => (
        <div key={k} className={`flex h-full shrink-0 flex-col items-center ${w}`}>
          <div className="grid flex-1 place-items-center pt-[1px]">{g24[k]}</div>
          <div className={`h-[2px] shrink-0 ${u ? "bg-[#84dfe8]" : ""} ${u}`} />
        </div>
      ))}
      <div className="ml-auto flex h-full items-center">
        <Svg w={16} className="mr-[22px]"><circle cx="10.500" cy="4" r="2.800" stroke="#fff" strokeWidth="1.200" /><path d="M7 11c0-5 8-5 8 0" stroke="#fff" strokeWidth="1.200" /><circle cx="4.500" cy="8.500" r="2.200" stroke="#fff" strokeWidth="1.200" /><path d="M1 15.500c0-5 7-5 7 0" stroke="#fff" strokeWidth="1.200" /></Svg>
        <Svg w={12} h={8} className="mr-[9px]"><path d="M1 6.500L6 1.500l5 5" stroke="#fff" strokeWidth="1.300" /></Svg>
        <Svg w={17} h={14} className="mr-[8px]"><path d="M1 5h2l3-3v10L3 9H1z" stroke="#fff" /><path d="M8 5c1 1 1 3 0 4M10.500 3c2 2 2 6 0 8M13 1c3.500 3 3.500 9 0 12" stroke="#fff" strokeWidth="1.100" /></Svg>
        <Svg w={17} h={11} className="mr-[8px]"><path d="M3.500 11a3 3 0 01-.5-6 5 5 0 019-1 4 4 0 012 7z" fill="#c9c9c9" /><path d="M3 11c0-4 5-6 7-3 4-1 7 0 6 3z" fill="#fafafa" /></Svg>
        <Svg w={17} h={12} className="mr-[10px]"><rect x="5" y="3.500" width="10" height="7" stroke="#fff" strokeWidth="1.200" /><path d="M16.200 5.500v3" stroke="#fff" /><rect x="6.500" y="5" width="4.500" height="4" fill="#fff" /><path d="M1.500 0v3M4.500 0v3M.5 3h5v2.500h-5zM3 5.500V10" stroke="#fff" /></Svg>
        <Svg w={14} className="mr-[10px]"><path d="M1 12.500C1 6 6 2 12.500 1.500M4 13c0-5 4-8 8.500-8.500M7 13c0-3 2.500-5 5.500-5.500" stroke="#ccc" strokeWidth="1.200" /><path d="M10 13c0-1.500 1-2.500 2.500-2.500V13z" fill="#fff" /></Svg>
        <span className="w-[24px] text-[11.300px]">ENG</span>
        <div className="ml-[7px] w-[62px] text-center text-[11.100px] leading-[18px] whitespace-nowrap">
          <div>8:54 PM</div>
          <div>9/16/2020</div>
        </div>
        <div className="relative mr-[12px] ml-[13px] w-[24px]">
          <Svg w={16} h={16}><path d="M0 0h16v12H7l-3 3.500V12H0z" fill="#fff" /><path d="M3 3.500h10M3 6h10M3 8.500h7" stroke="#111" /></Svg>
          <span className="absolute top-[7px] left-[8px] grid h-4 w-4 place-items-center rounded-full border border-[#8b8b8b] bg-[#333] text-[10px] leading-none font-semibold">9</span>
        </div>
        <span className="mr-1 h-full w-px bg-[#5f5f5f]" />
      </div>
    </footer>
  );
}

export default function App() {
  return (
    <main className="relative h-[768px] w-[1366px] overflow-hidden bg-black font-['Open_Sans','Noto_Sans',sans-serif]">
      <Wallpaper />
      {desktop.map(([pos, icon, label]) => (
        <DesktopIcon key={pos} pos={pos} icon={icon} label={label} />
      ))}
      <span className="absolute top-[42px] left-[2px] text-[11.400px] leading-[15px] text-white">t</span>
      <span className="absolute top-[482px] left-[392px] text-[11.400px] leading-[15px] text-white">T</span>
      <div className="absolute top-[570px] left-[378px] text-[11.400px] leading-[15px] whitespace-pre text-white">{"Hen\n  - Copy.pdf"}</div>
      <div className="absolute top-[649px] left-[1073px] text-[#858585]">
        <div className="text-[19.100px] leading-[26px]">Activate Windows</div>
        <div className="text-[14.400px] leading-[19px]">Go to Settings to activate Windows.</div>
      </div>
      <PasswordWindow />
      <Explorer />
      <Taskbar />
    </main>
  );
}
